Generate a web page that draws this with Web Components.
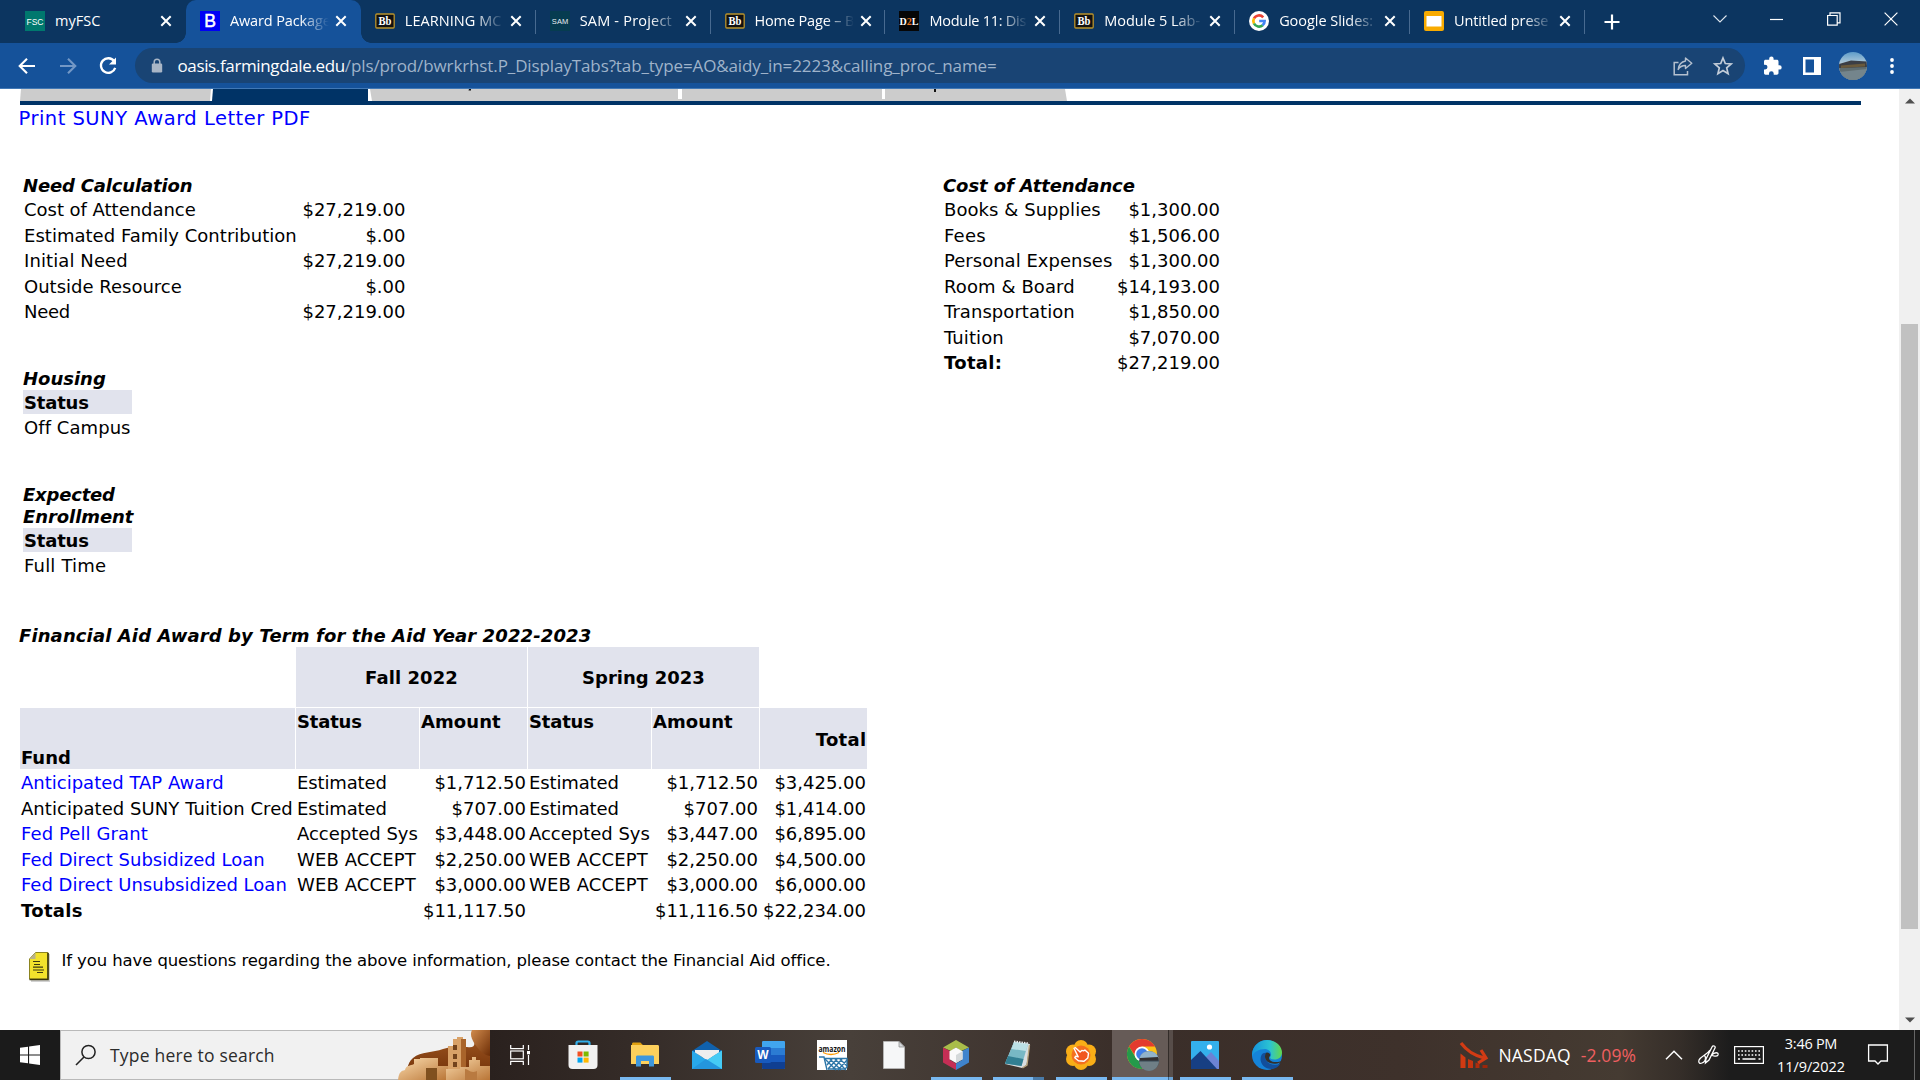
<!DOCTYPE html>
<html lang="en">
<head>
<meta charset="utf-8">
<title>Award Package</title>
<style>
html,body{margin:0;height:1080px;overflow:hidden;background:#fff}
body{font-family:"Open Sans","Noto Sans",sans-serif}
</style>
</head>
<body>
<desktop-screen></desktop-screen>
<script>
const define=(name,css,html,after)=>customElements.define(name,class extends HTMLElement{
  connectedCallback(){
    if(this.shadowRoot)return;
    const root=this.attachShadow({mode:'open'});
    const t=document.createElement('template');
    t.innerHTML='<style>*{box-sizing:border-box}'+css+'</style>'+(typeof html==='function'?html(this):html);
    root.appendChild(t.content.cloneNode(true));
    if(after)after(this,root);
  }
});
const esc=s=>s.replace(/&/g,'&amp;');
/* fit: spreads a label over a fixed advance width by letter spacing */
const fit=(s,w)=>`<fit-text w="${w}">${esc(s)}</fit-text>`;

define('fit-text',':host{display:inline-block;white-space:pre}span{display:inline-block}','<span><slot></slot></span>',(el,root)=>{
  const s=root.querySelector('span'),n=el.textContent.length;
  const w=parseFloat(el.getAttribute('w')),r=s.getBoundingClientRect().width;
  if(r>0)s.style.letterSpacing=(w+.8-r)/n+'px';
});

const ICON={
fsc:[20,20,'<rect width="20" height="20" fill="#00786e"/><text x="10" y="14" font-family="Liberation Sans" font-size="9.5" textLength="17" lengthAdjust="spacingAndGlyphs" text-anchor="middle" fill="#fff">FSC</text>'],
b:[20,20,'<rect width="20" height="20" fill="#0000f5"/><text x="10" y="16" font-family="Liberation Sans" font-size="17.500" stroke="#fff" stroke-width=".5" text-anchor="middle" fill="#fff">B</text>'],
bb:[20,20,'<rect x=".8" y="3" width="18.4" height="14" rx="1" fill="#111" stroke="#b8922c" stroke-width="1.3"/><text x="10" y="14.2" font-family="Liberation Serif" font-weight="bold" font-size="12" textLength="13" lengthAdjust="spacingAndGlyphs" text-anchor="middle" fill="#fff">Bb</text>'],
sam:[20,20,'<rect width="20" height="20" fill="#063c50"/><text x="10" y="13.4" font-family="Liberation Sans" font-size="7.5" textLength="16.5" text-anchor="middle" fill="#e8eef2">SAM</text>'],
d2l:[20,20,'<rect width="20" height="20" fill="#060606"/><text x="10" y="14" font-family="Liberation Serif" font-weight="bold" font-size="11" textLength="19" lengthAdjust="spacingAndGlyphs" text-anchor="middle" fill="#fff">D<tspan fill="#e87722">2</tspan>L</text>'],
g:[20,20,'<circle cx="10" cy="10" r="10" fill="#fff"/><g fill="none" stroke-width="2.7"><path d="M14.2 6.4A5.6 5.6 0 0 0 5 7.5" stroke="#ea4335"/><path d="M5 7.4a5.6 5.6 0 0 0 0 5.2" stroke="#fbbc05"/><path d="M5 12.5a5.6 5.6 0 0 0 8.7 1.7" stroke="#34a853"/><path d="M13.6 14.3a5.5 5.5 0 0 0 2-4.3H10.2" stroke="#4285f4"/></g>'],
slides:[20,20,'<rect width="20" height="20" rx="2" fill="#f9ab00"/><rect x="2.5" y="5" width="15" height="10.5" fill="#fff"/>'],
x:[12,12,'<path d="M1.3 1.3l9.4 9.4M10.7 1.3L1.3 10.7" stroke="#fff" stroke-width="2"/>'],
plus:[16,16,'<path d="M8 .5v15M.5 8h15" stroke="#fff" stroke-width="2.2"/>'],
chev:[14,14,'<path d="M.5 3.5L7 10l6.5-6.5" fill="none" stroke="#dfe6ee" stroke-width="1.1"/>'],
min:[14,14,'<path d="M0 7.5h13" stroke="#fff" stroke-width="1.2"/>'],
restore:[14,14,'<path d="M.6 3.5h9.6v9.6H.6zM3 3.4V.8h10v10h-2.6" fill="none" stroke="#fff" stroke-width="1.2"/>'],
close:[14,14,'<path d="M.6.6l12.8 12.8M13.4.6L.6 13.4" stroke="#fff" stroke-width="1.2"/>'],
back:[18,18,'<path d="M17 9H2M9 1.7L1.7 9 9 16.300" fill="none" stroke="#fff" stroke-width="2.1"/>'],
fwd:[18,18,'<path d="M1 9h15M9 1.7L16.300 9 9 16.300" fill="none" stroke="#7398c6" stroke-width="2.1"/>'],
reload:[20,20,'<path d="M16.200 5.300A7.300 7.300 0 1 0 17.200 11.800" fill="none" stroke="#fff" stroke-width="2.300"/><path d="M18 1.500v7h-7z" fill="#fff"/>'],
lock:[12,16,'<rect x=".8" y="5.500" width="10.400" height="9" rx="1.200" fill="#a9b6c6"/><path d="M3.200 6V4a2.800 2.800 0 0 1 5.600 0v2" fill="none" stroke="#a9b6c6" stroke-width="1.500"/>'],
share:[20,20,'<path d="M5.500 6.500H1.200v12.300H14.500V15" fill="none" stroke="#b4c0cf" stroke-width="1.500"/><path d="M12.500 2l6.300 5.200-6.300 5.300V9.500c-3.500 0-5.800 1.200-7.300 4C5.700 9 8 5.800 12.500 5z" fill="none" stroke="#b4c0cf" stroke-width="1.400" stroke-linejoin="round"/>'],
star:[20,20,'<path d="M10 2l2.300 5.500 5.900.5-4.500 3.900 1.400 5.800L10 14.600l-5.100 3.100 1.400-5.800L1.800 8l5.900-.5z" fill="none" stroke="#c3cdd9" stroke-width="1.700"/>'],
puzzle:[20,20,'<path d="M16.500 9.200h-1V5.400c0-1-.7-1.700-1.700-1.700H10.600V2.600a2.200 2.200 0 0 0-4.400 0v1.100H2.600C1.700 3.700 1 4.400 1 5.400v3.300h1.100a2.400 2.400 0 0 1 0 4.800H1V17c0 1 .7 1.700 1.600 1.700H6v-1.100a2.300 2.300 0 0 1 4.700 0v1.100h3.100c1 0 1.700-.7 1.700-1.700v-3.400h1a2.200 2.200 0 0 0 0-4.400z" fill="#fff"/>'],
panel:[20,20,'<rect x="1" y="1" width="18" height="18" fill="#fff"/><rect x="3.500" y="3.500" width="8.500" height="13" fill="#15529a"/>'],
avatar:[28,28,'<defs><clipPath id="c"><circle cx="14" cy="14" r="14"/></clipPath><linearGradient id="s" x2="0" y2="1"><stop offset="0" stop-color="#5e9cc9"/><stop offset=".45" stop-color="#b9cfdc"/></linearGradient></defs><g clip-path="url(#c)"><rect width="28" height="28" fill="url(#s)"/><rect y="15" width="28" height="13" fill="#5f6d70"/><path d="M0 12l12-3.500 16 1V15L0 16z" fill="#3b3e45"/><path d="M2 13.500l24-2v3L2 16z" fill="#6a5a3c"/><path d="M0 20l28-3v11H0z" fill="#74858c"/></g>'],
dots:[6,18,'<g fill="#fff"><circle cx="3" cy="3" r="1.900"/><circle cx="3" cy="9" r="1.900"/><circle cx="3" cy="15" r="1.900"/></g>'],
note:[24,32,'<path d="M9 3h13v28H3V9z" fill="#999" opacity=".45"/><path d="M7.500 1.500H20v26.500H1.500V8z" fill="#f2e22c" stroke="#8c841f" stroke-width="1"/><path d="M7.500 1.500V8h-6z" fill="#b9b28a"/><path d="M20 2v26.500H1.500" fill="none" stroke="#3a370d" stroke-width="1.600"/><path d="M5 10.500h7M6 13.500h6M5 16.200h10M5 19h11M9 21.500h6" stroke="#3d3a10" stroke-width="1.200"/>'],
win:[20,20,'<path d="M0 2.800L8 1.700V9.400H0zM9.100 1.500L20 0V9.400H9.100zM0 10.600h8v7.700L0 17.200zM9.100 10.600H20V20L9.100 18.500z" fill="#fff"/>'],
search:[22,22,'<circle cx="13.500" cy="8" r="6.600" fill="none" stroke="#222" stroke-width="1.500"/><path d="M9 13L1 21" stroke="#222" stroke-width="1.600"/>'],
art:[92,50,'<defs><linearGradient id="a" x2="0" y2="1"><stop stop-color="#a35a24"/><stop offset="1" stop-color="#6e2e06"/></linearGradient><linearGradient id="w" x2="1" y2="1"><stop stop-color="#fbdcae"/><stop offset="1" stop-color="#b97536"/></linearGradient><linearGradient id="k" x2="1" y2="1"><stop stop-color="#d08a4c"/><stop offset="1" stop-color="#6e2e06"/></linearGradient></defs><path d="M15 28c8-7 20-5 30-9 8-3 17-3 24-2 10 2 8-6 5-11-1-4 4-6 8-6h10v50H6c4-8 2-16 9-22z" fill="url(#a)"/><path d="M74 0h18v26c-6-1-9-4-13-9-4-5-8-12-5-17z" fill="url(#k)"/><path d="M0 50c1-8 3-9 7-10 1-5 5-4 9-6v-5h6v-1h18v8h10v14z" fill="url(#w)"/><path d="M50 50V16h5V9h4V7h6v2h3v41z" fill="#d9a268"/><path d="M63 9h5v41h-5z" fill="#a9642a"/><path d="M55 15h4v5h-4zM55 24h4v5h-4zM55 32h4v5h-4z" fill="#73431c"/><path d="M48 50V39h14v-2h9v-7h3v-3h4v3h4v6h10v14z" fill="url(#w)"/><path d="M28 50V38h11v12z" fill="#80501f"/><path d="M67 50V39c4 0 5 5 12 2v9z" fill="#b97a40"/>'],
task:[20,20,'<path d="M.7 0v3.600h12.600V0M.7 20v-3.600h12.600V20" fill="none" stroke="#fff" stroke-width="1.200"/><rect x=".7" y="6" width="12.600" height="7.800" fill="none" stroke="#fff" stroke-width="1.200"/><path d="M18.500 0v5M18.500 10v10" stroke="#fff" stroke-width="1.200"/><path d="M17 6h3v3.300h-3z" fill="#fff"/>'],
store:[30,30,'<path d="M8.500 5V3.200C8.500 2 9.300 1.500 10.300 1.500h9.400c1 0 1.800.5 1.800 1.700V5" fill="none" stroke="#31aee9" stroke-width="2.200"/><path d="M.5 5h29v20a4 4 0 0 1-4 4H4.500a4 4 0 0 1-4-4z" fill="#f1f1f1"/><path d="M9.500 11.500h5v5h-5z" fill="#f25022"/><path d="M15.600 11.500h5v5h-5z" fill="#7fba00"/><path d="M9.500 17.600h5v5h-5z" fill="#00a4ef"/><path d="M15.600 17.600h5v5h-5z" fill="#ffb900"/>'],
folder:[28,26,'<path d="M1 2c0-.8.500-1.500 1.400-1.500h7l3 3H1z" fill="#e0a010"/><path d="M0 3h26.500c1 0 1.500.6 1.500 1.500V22H0z" fill="#fdd05c"/><path d="M5 24.500V15c0-1 .6-1.500 1.500-1.500h15c1 0 1.500.5 1.500 1.500v9.500h-5V19h-8v5.500z" fill="#3e97dc"/>'],
mail:[30,28,'<path d="M0 10L15 0l15 10v3H0z" fill="#1061ac"/><path d="M3 9h24L15 20z" fill="#f2f2f2"/><path d="M0 9.500L15 19 30 9.500V28H0z" fill="#28a8ea"/><path d="M3 9h24v2.500L15 19 3 11.500z" fill="#eee"/><path d="M30 9.500V28H2l13-9z" fill="#45cbf5"/><path d="M0 28h30L14 18z" fill="#2496de"/>'],
word:[30,28,'<rect x="7" width="23" height="28" rx="1.500" fill="#2b7cd3"/><path d="M7 1.500C7 .6 7.600 0 8.500 0h20c1 0 1.500.6 1.500 1.500V7H7z" fill="#41a5ee"/><path d="M7 14h23v7H7z" fill="#185abd"/><path d="M7 21h23v5.500c0 1-.6 1.500-1.500 1.500h-20c-1 0-1.500-.6-1.500-1.500z" fill="#103f91"/><rect y="6" width="16" height="16" rx="1.500" fill="#185abd"/><text x="8" y="18.200" text-anchor="middle" font-family="Liberation Sans" font-weight="bold" font-size="12" fill="#fff">W</text>'],
amazon:[30,30,'<rect width="30" height="30" fill="#fff"/><text x="15" y="11.500" text-anchor="middle" font-family="Open Sans" font-weight="bold" font-size="8.500" textLength="27" lengthAdjust="spacingAndGlyphs" fill="#111">amazon</text><path d="M6 12.500c5 2.500 11 2.500 16 0" fill="none" stroke="#f90" stroke-width="1.300"/><path d="M2 17h5l3 13M8 18.500h22V27l-2 2H11" fill="none" stroke="#2c76a8" stroke-width="1.400"/><path d="M8 19l11 11M13 19l11 11M18 19l11 11M23 19l7 7M11 29l9-10M16 29l9-10M21 30l9-10M10 25l5-6" stroke="#2c76a8" stroke-width="1.400"/>'],
doc:[22,28,'<path d="M.5.5H16l5.500 5.500v21.500H.5z" fill="#f6f7f8" stroke="#bbb" stroke-width=".8"/><path d="M16 .5V6h5.500z" fill="#d5d8db" stroke="#888" stroke-width=".7"/>'],
hex:[28,30,'<path d="M14 0l13 7.500L19 11l-5-3.500L9 11 1 7.500z" fill="#a9bd4a"/><path d="M1 7.500L8 11v9l6 3.500V30L1 22.500z" fill="#c52e55"/><path d="M27 7.500L20 11v9l-6 3.500V30l13-7.500z" fill="#3f84cd"/><path d="M14 7.500l6.500 3.700v8L14 23l-6.500-3.800v-8z" fill="#fafafa"/><path d="M14 15l6.500-3.800v8L14 23z" fill="#d5d9da"/>'],
notepad:[28,30,'<path d="M10 2l16 2-3.500 21L18 28 1 24z" fill="#d8dde0"/><path d="M10 2l14 2-6.500 22L1 23.500z" fill="#78b8c5"/><path d="M10 2l14 2-2 7L7.500 9z" fill="#bce0e5"/><path d="M4 16L1 23.500 17.500 26l2-7z" fill="#327f93"/><path d="M10 1.500l15 2" stroke="#e9edef" stroke-width="2" stroke-dasharray="1.500 1"/><path d="M25.500 5l-2.500 20-4.500 3" fill="none" stroke="#b9a47c" stroke-width="1.300"/>'],
orange:[30,30,'<g fill="#f9ae17"><circle cx="15" cy="7" r="7"/><circle cx="15" cy="23" r="7"/><circle cx="7" cy="11.500" r="7"/><circle cx="23" cy="11.500" r="7"/><circle cx="7" cy="19" r="7"/><circle cx="23" cy="19" r="7"/></g><circle cx="15" cy="15" r="9.500" fill="#f4701f"/><path d="M8 8.300l1.500-.6 4.600 4.300 1.700-1.600 1.800.5 1.300-.9 3.600 3.300-.7 4.700-3.800 3.200-5.600-.5-3.600-3 .8-1.400 2.600.6z" fill="#f1561f" stroke="#fff" stroke-width="1.400" stroke-linejoin="round"/>'],
chrome:[32,32,'<circle cx="15" cy="15" r="15" fill="#fbc116"/><path d="M2 7.500A15 15 0 0 1 28 7.500H15L9 18z" fill="#e33b2e"/><path d="M2 7.500a15 15 0 0 0 13 22.500l6-11H9z" fill="#249a4a"/><circle cx="15" cy="15" r="7.500" fill="#fff"/><circle cx="15" cy="15" r="5.800" fill="#3f7ee8"/><circle cx="22" cy="22" r="10" fill="#394b57"/><path d="M12.500 19a10 10 0 0 1 19 0z" fill="#91b2ca"/><path d="M12 22.500h20c-.5 5-4.500 9.500-10 9.500s-9.500-4.500-10-9.500z" fill="#6f7f86"/><path d="M13 19l18-1v3.500H13z" fill="#332f30"/>'],
photos:[28,28,'<rect width="28" height="28" rx="1" fill="#34b0ec"/><path d="M14 17l6-6 8 9v8H14z" fill="#6c83d5"/><path d="M0 19L9.500 10 26 28H0z" fill="#173f83"/><circle cx="18.500" cy="6" r="2.600" fill="#fff"/>'],
edge:[30,30,'<defs><linearGradient id="e" x2="1"><stop stop-color="#1592dc"/><stop offset=".6" stop-color="#2bc3d2"/><stop offset="1" stop-color="#63d84a"/></linearGradient></defs><circle cx="15" cy="15" r="15" fill="#1583d8"/><path d="M0 14C1 5 8 0 15 0c9 0 15 6.500 15 12.500 0 4.500-3.500 7-7.500 7s-5-1.500-4-3c2-3-1-7.500-6-7.500C7 9 1 12 0 17z" fill="url(#e)"/><path d="M9.500 15c-3 6 1.500 14 10 14 4 0 7-2.500 9-5.500-4 2-10 1.500-13-1.500-2.500-2.500-3-6-1-9-2-.500-4 .500-5 2z" fill="#124f9c"/><path d="M14 13c-2 3-1 7 2 9 4 2.500 9 2 12 .5 1.500-1 1-1.500 0-1-5 1.500-11 0-11-3.500 0-1.500 1.500-2 1.200-3.500C17.500 13 15.500 12 14 13z" fill="#32302e"/>'],
stock:[28,28,'<path d="M1 2c6 8 12 12 23 15M18 22l8-5-5-8" fill="none" stroke="#d23b14" stroke-width="3.200"/><path d="M.500 12.500l5 4V27h-5z" fill="#d23a12"/><path d="M8 18l5 2v7H8z" fill="#c5340f"/><path d="M15.500 21.500l4 1.500v4h-4z" fill="#b02c0c"/><path d="M22.500 24h5v3h-5z" fill="#9c260a"/>'],
up:[18,10,'<path d="M1 9.300l8-8 8 8" fill="none" stroke="#fff" stroke-width="1.500"/>'],
pen:[22,22,'<path d="M8 15L14 3c1-2 4-1 3 1L11 16l-3.500 3zM12 6c-3 5-9 6-11 10-1 3 1 4 3 3 5-2 4-9 1-7M14 11c2-3 7-3 6 0-1 2-5 1-7 0" fill="none" stroke="#fff" stroke-width="1.300"/>'],
kbd:[30,18,'<rect x=".6" y=".6" width="28.800" height="16.800" fill="none" stroke="#fff" stroke-width="1.200"/><path d="M4 5h23M4 9h23" stroke="#fff" stroke-width="1.600" stroke-dasharray="1.600 1.800"/><path d="M4 13h2M8.500 13h13M24.500 13h2" stroke="#fff" stroke-width="1.500"/>'],
notif:[20,22,'<path d="M.6 1h18.800v16H13l-3 3-3-3H.6z" fill="none" stroke="#fff" stroke-width="1.300"/>'],
tri:[10,6,'<path d="M0 5.500L5 .5l5 5z" fill="#505050"/>']
};
define('ui-icon',':host{display:block;flex:none}svg{display:block;overflow:visible}',el=>{const [w,h,s]=ICON[el.getAttribute('name')];return `<svg width="${w}" height="${h}" viewBox="0 0 ${w} ${h}">${s}</svg>`});
const ic=(n,st='')=>`<ui-icon name="${n}" style="${st}"></ui-icon>`;

/* one browser tab: favicon, fading title, close cross */
define('browser-tab',`:host{display:flex;align-items:center;width:174.88px;height:43px;padding:0 0 2px 14px;position:relative;font-size:14.5px;color:#fff;flex:none}
.t{width:99px;margin-left:10px;overflow:hidden;white-space:nowrap;line-height:24px;height:24px}
:host([fade]) .t{-webkit-mask-image:linear-gradient(90deg,#000 70px,transparent 99px)}
:host([line])::after{content:"";position:absolute;right:0;top:10px;height:24px;width:1px;background:#486a90}
:host([active]){background:#15529a;border-radius:10px 10px 0 0}
:host([active])::before,:host([active])::after{content:"";position:absolute;bottom:0;width:10px;height:10px}
:host([active])::before{left:-10px;background:radial-gradient(circle at 0 0,transparent 9.500px,#15529a 10px)}
:host([active])::after{right:-10px;background:radial-gradient(circle at 100% 0,transparent 9.500px,#15529a 10px)}`,
el=>`${ic(el.getAttribute('icon'))}<div class="t">${fit(el.getAttribute('label'),el.getAttribute('w'))}</div>${ic('x','margin-left:6px')}`);

const TABS=[['fsc','myFSC',44.5,''],['b','Award Package',100,'active fade'],['bb','LEARNING MC',96,'line fade'],['sam','SAM - Project',91.5,'line fade'],['bb','Home Page – B',99,'line fade'],['d2l','Module 11: Dis',96,'line fade'],['bb','Module 5 Lab-',95,'line fade'],['g','Google Slides:',93,'line fade'],['slides','Untitled prese',93.5,'line fade']];
define('tab-strip',`:host{display:flex;height:43px;background:#0c3560;padding-left:11px}
.p{width:54px;height:43px;display:flex;align-items:center;justify-content:center}
.w{margin-left:auto;display:flex;height:37px}.w div{width:57.200px;display:flex;align-items:center;justify-content:center}`,
TABS.map(([i,l,w,a])=>`<browser-tab icon="${i}" label="${l}" w="${w}" ${a}></browser-tab>`).join('')+
`<div class="p">${ic('plus')}</div><div class="w">${['chev','min','restore','close'].map(n=>`<div>${ic(n)}</div>`).join('')}</div>`);

define('tool-bar',`:host{display:flex;align-items:center;height:46px;background:#15529a;border-bottom:1px solid #4178b5}
.nav{display:flex;width:135px;padding-left:18px;gap:23px;align-items:center}
.pill{width:1610px;height:35px;border-radius:18px;background:#194474;display:flex;align-items:center;padding-left:16px;font-size:17px;color:#9fb3ca;line-height:24px}
.d{color:#fff;margin-left:14.500px}.r{margin-left:auto;display:flex;gap:20px;padding-right:12px}
.a{display:flex;align-items:center;padding-left:18px}`,
`<div class="nav">${ic('back')}${ic('fwd')}${ic('reload','margin-left:-2px')}</div><div class="pill">${ic('lock')}<span class="d">${fit('oasis.farmingdale.edu',166.5)}</span><span>${fit('/pls/prod/bwrkrhst.P_DisplayTabs?tab_type=AO&aidy_in=2223&calling_proc_name=',651)}</span><div class="r">${ic('share')}${ic('star')}</div></div><div class="a">${ic('puzzle')}${ic('panel','margin-left:19px')}${ic('avatar','margin-left:17px')}${ic('dots','margin-left:22px')}</div>`);

/* bottom edge of the site's own tab row, cut by the scroll position */
define('site-tabs',':host{display:block;height:16px;border-bottom:4px solid #003366;width:1841px;margin-left:20px}svg{display:block}',
`<svg width="1841" height="12"><path d="M1 0h190l-1 12H0z" fill="#ccc"/><path d="M193 0h155v12H192z" fill="#036"/><path d="M350 0h308v10h4V0h200v10h3V0h180l2 12H352z" fill="#ccc"/><path d="M449 0h2v1.500h-2.500zM914 0h2v3h-2z" fill="#111"/></svg>`);

/* italic heading over label/value rows */
define('figure-list',`:host{display:block}h3{margin:0;font:italic bold 18px/22px "DejaVu Sans";height:22px;width:max-content}
.g{display:grid;grid-auto-rows:25.500px;grid-template-columns:var(--l) 1fr;width:var(--w);line-height:25.500px;padding-left:1px}
.g>:nth-child(even){text-align:right}b{font-weight:bold}`,el=>{
const rows=JSON.parse(el.getAttribute('rows'));
return `<h3>${fit(el.getAttribute('head'),el.getAttribute('hw'))}</h3><div class="g">${rows.map(([l,w,v])=>`<span>${l.endsWith(':')?'<b>':''}${fit(l,w)}${l.endsWith(':')?'</b>':''}</span><span>${v}</span>`).join('')}</div>`});

define('status-box',`:host{display:block;width:109px}h3{margin:0;font:italic bold 18px/22px "DejaVu Sans";white-space:nowrap}h3 div{height:22px}
.b{background:#e1e3ed;height:24px;line-height:25px;font-weight:bold;padding-left:1px}.v{height:25.500px;line-height:25.500px;padding-left:1px;margin-top:1px}`,el=>{
const h=JSON.parse(el.getAttribute('head')),v=JSON.parse(el.getAttribute('value'));
return `<h3>${h.map(([t,w])=>`<div>${fit(t,w)}</div>`).join('')}</h3><div class="b">${fit('Status',64)}</div><div class="v">${fit(...v)}</div>`});

const E=['Estimated',89],A=['Accepted Sys',120],W=['WEB ACCEPT',118];
const AW=[['Anticipated TAP Award',202,E,'$1,712.50','$1,712.50','$3,425.00'],['Anticipated SUNY Tuition Cred',271,E,'$707.00','$707.00','$1,414.00'],['Fed Pell Grant',126,A,'$3,448.00','$3,447.00','$6,895.00'],['Fed Direct Subsidized Loan',243,W,'$2,250.00','$2,250.00','$4,500.00'],['Fed Direct Unsubsidized Loan',265,W,'$3,000.00','$3,000.00','$6,000.00']];
define('award-table',`:host{display:block;width:847px}
h3{margin:0 0 0 -1px;font:italic bold 18px/22px "DejaVu Sans";height:22px}
.g{display:grid;grid-template-columns:275px 123px 107px 123px 107px 107px;column-gap:1px}
.h1,.h2{font-weight:bold;line-height:22px}.h1{grid-template-rows:60px}.h2{grid-template-rows:61px;margin:1px 0}
.h1 div:not(.e),.h2 div{background:#e1e3ed}
.h1 div{display:flex;align-items:center;justify-content:center;padding-top:2px}.t{grid-column:span 2}
.h2 div{padding:3px 1px;display:flex}.h2 .f{align-items:flex-end;padding-bottom:0}.h2 .r{align-items:center;justify-content:flex-end;padding:2px .5px 0}
.row{grid-template-rows:25.500px;line-height:25.500px}.row>*{padding:0 1px;white-space:nowrap}.n{text-align:right}.l{color:#00f}`,
`<h3>${fit('Financial Aid Award by Term for the Aid Year 2022-2023',571.5)}</h3>
<div class="g h1"><div class="e"></div><div class="t">${fit('Fall 2022',92)}</div><div class="t">${fit('Spring 2023',122)}</div></div>
<div class="g h2"><div class="f">${fit('Fund',49)}</div><div>${fit('Status',64)}</div><div>${fit('Amount',79)}</div><div>${fit('Status',64)}</div><div>${fit('Amount',79)}</div><div class="r">${fit('Total',50)}</div></div>
${AW.map(([l,w,s,a,b,t],i)=>`<div class="g row"><span class="${i==1?'':'l'}">${fit(l,w)}</span><span>${fit(...s)}</span><span class="n">${a}</span><span>${fit(...s)}</span><span class="n">${b}</span><span class="n">${t}</span></div>`).join('')}
<div class="g row"><b>${fit('Totals',61)}</b><span></span><span class="n">$11,117.50</span><span></span><span class="n">$11,116.50</span><span class="n">$22,234.00</span></div>`);

define('scroll-bar',`:host{display:flex;flex-direction:column;align-items:center;width:21px;background:#f0f0f0;height:941px;padding:9px 0 7px}
.th{width:17px;height:605px;background:#c1c1c1;margin-top:220px}.d{margin-top:auto;transform:rotate(180deg)}`,
`${ic('tri')}<div class="th"></div><div class="d">${ic('tri')}</div>`);

const q=o=>esc(JSON.stringify(o)).replace(/"/g,'&quot;');
define('aid-page',`:host{display:flex;height:941px;background:#fff;color:#000;font:18px/22px "DejaVu Sans",sans-serif}
main{width:1899px}.print{color:#00f;font-size:19.500px;line-height:28px;height:28px;padding-left:18.500px;margin-bottom:42px}
.cols{display:flex;height:450px}.left{width:943px;padding-left:23px}
figure-list{--l:165px;--w:277px}.left figure-list{--l:275px;--w:382.500px}
status-box{margin-top:43.500px}
award-table{margin-left:20px}
.q{display:flex;padding:27.500px 0 0 28px;font-size:16.500px;line-height:20px}.q span{margin-left:10px}.q>span{margin-left:9.500px}`,
`<main><site-tabs></site-tabs><div class="print">${fit('Print SUNY Award Letter PDF',291.5)}</div>
<div class="cols"><div class="left">
<figure-list head="Need Calculation" hw="168.5" rows="${q([['Cost of Attendance',171,'$27,219.00'],['Estimated Family Contribution',272,'$.00'],['Initial Need',103,'$27,219.00'],['Outside Resource',157,'$.00'],['Need',45,'$27,219.00']])}"></figure-list>
<status-box head="${q([['Housing',82]])}" value="${q(['Off Campus',105.5])}"></status-box>
<status-box head="${q([['Expected',91],['Enrollment',109.5]])}" value="${q(['Full Time',81.5])}"></status-box>
</div><figure-list head="Cost of Attendance" hw="191" rows="${q([['Books & Supplies',156,'$1,300.00'],['Fees',41,'$1,506.00'],['Personal Expenses',167.5,'$1,300.00'],['Room & Board',130,'$14,193.00'],['Transportation',130,'$1,850.00'],['Tuition',59,'$7,070.00'],['Total:',57.5,'$27,219.00']])}"></figure-list></div>
<award-table></award-table>
<div class="q">${ic('note')}<span>${fit('If you have questions regarding the above information, please contact the Financial Aid office.',768)}</span></div></main><scroll-bar></scroll-bar>`);

define('app-button',`:host{display:flex;width:62.200px;height:50px;align-items:center;justify-content:center;position:relative;flex:none}
:host([icon=task]){width:61px;margin-right:2px}
:host([run])::after{content:"";position:absolute;left:6px;width:51px;bottom:0;height:3px;background:#78b8f0}
:host([run=stack])::after{background:linear-gradient(90deg,#78b8f0 40px,#4a7ba8 40px)}
:host([run=on])::before{content:"";position:absolute;left:0;width:61px;top:0;bottom:0;background:linear-gradient(90deg,#665b57 56px,#332c29 56px,#332c29 57px,#574d49 57px)}
:host([run=on])::after{left:0;width:61px;background:linear-gradient(90deg,#78b8f0 56px,#3e668c 56px,#3e668c 57px,#6aa3d5 57px)}
ui-icon{position:relative}`,el=>ic(el.getAttribute('icon')));
const APPS=[['task'],['store'],['folder',1],['mail'],['word'],['amazon'],['doc'],['hex',1],['notepad','stack'],['orange',1],['chrome','on'],['photos',1],['edge',1]];
define('task-bar',`:host{display:flex;height:50px;color:#fff;background:linear-gradient(90deg,#1c1c1c 60px,#2a211e 490px,#352c28 640px,#48403a 850px,#3a2e29 1130px,#3e312b 1400px,#453b32 1620px,#352e29 1680px,#1c1c1c 1730px)}
.s{width:60px;display:flex;align-items:center;justify-content:center;background:#1b1b1b}
.f{width:430px;background:#f1f1f1;border:1px solid #b9b9b9;border-right:0;display:flex;align-items:center;padding-left:14px;color:#2b2b2b;font-size:17.500px;line-height:24px}
.f span{margin-left:13px;padding-bottom:1px}.apps{display:flex;width:810px;margin-left:-1px}
.n{display:flex;align-items:center;width:209px;margin-left:160.500px;font-size:17.500px}
.tray{display:flex;align-items:center;flex:1;border-right:1px solid #666;margin-right:5px}
.c{font-size:14.500px;line-height:23px;text-align:center;width:74px;margin-left:10px}.c div{height:23px}`,
`<div class="s">${ic('win')}</div><div class="f">${ic('search')}<span>${fit('Type here to search',164)}</span>${ic('art','margin-left:auto')}</div>
<div class="apps">${APPS.map(([i,r])=>`<app-button icon="${i}" ${r?`run="${r}"`:''}></app-button>`).join('')}</div>
<div class="n">${ic('stock')}<span style="margin-left:11px">${fit('NASDAQ',71.5)}</span><span style="margin-left:10px;color:#ef5f60">${fit('-2.09%',54.5)}</span></div>
<div class="tray">${ic('up','margin-left:-3.5px')}${ic('pen','margin-left:15px')}${ic('kbd','margin-left:14px')}<div class="c"><div>${fit('3:46 PM',51.5)}</div><div>${fit('11/9/2022',67)}</div></div>${ic('notif','margin-left:20px')}</div>`);

define('desktop-screen',':host{display:flex;flex-direction:column;width:1920px;height:1080px;overflow:hidden}',
'<tab-strip></tab-strip><tool-bar></tool-bar><aid-page></aid-page><task-bar></task-bar>');
</script>
</body>
</html>
